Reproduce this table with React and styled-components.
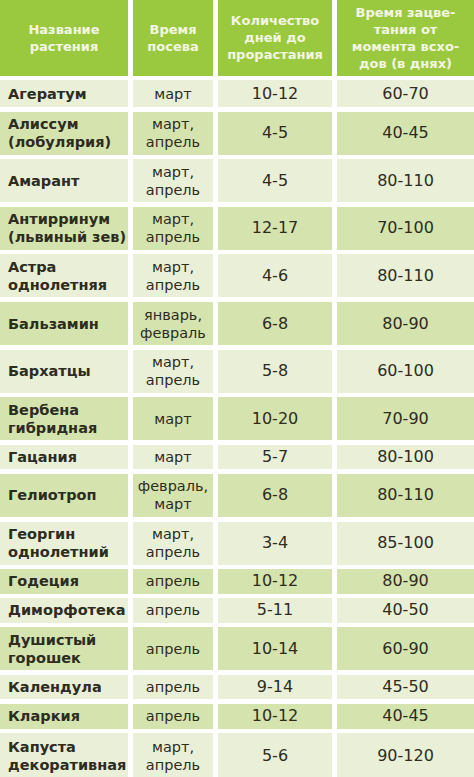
import React from 'react'
import styled, { createGlobalStyle } from 'styled-components'

const GlobalStyle = createGlobalStyle`
  html, body {
    margin: 0;
    padding: 0;
    background: #ffffff;
  }
  body {
    font-family: "DejaVu Sans", "Liberation Sans", sans-serif;
  }
`

const plants = [
  { name: ['Агератум'], month: ['март'], days: '10-12', bloom: '60-70', h: 27 },
  { name: ['Алиссум', '(лобулярия)'], month: ['март,', 'апрель'], days: '4-5', bloom: '40-45' },
  { name: ['Амарант'], month: ['март,', 'апрель'], days: '4-5', bloom: '80-110' },
  { name: ['Антирринум', '(львиный зев)'], month: ['март,', 'апрель'], days: '12-17', bloom: '70-100' },
  { name: ['Астра', 'однолетняя'], month: ['март,', 'апрель'], days: '4-6', bloom: '80-110' },
  { name: ['Бальзамин'], month: ['январь,', 'февраль'], days: '6-8', bloom: '80-90' },
  { name: ['Бархатцы'], month: ['март,', 'апрель'], days: '5-8', bloom: '60-100' },
  { name: ['Вербена', 'гибридная'], month: ['март'], days: '10-20', bloom: '70-90' },
  { name: ['Гацания'], month: ['март'], days: '5-7', bloom: '80-100' },
  { name: ['Гелиотроп'], month: ['февраль,', 'март'], days: '6-8', bloom: '80-110' },
  { name: ['Георгин', 'однолетний'], month: ['март,', 'апрель'], days: '3-4', bloom: '85-100' },
  { name: ['Годеция'], month: ['апрель'], days: '10-12', bloom: '80-90' },
  { name: ['Диморфотека'], month: ['апрель'], days: '5-11', bloom: '40-50' },
  { name: ['Душистый', 'горошек'], month: ['апрель'], days: '10-14', bloom: '60-90' },
  { name: ['Календула'], month: ['апрель'], days: '9-14', bloom: '45-50' },
  { name: ['Кларкия'], month: ['апрель'], days: '10-12', bloom: '40-45' },
  { name: ['Капуста', 'декоративная'], month: ['март,', 'апрель'], days: '5-6', bloom: '90-120', h: 46 },
]

const Table = styled.div`
  width: 474px;
  display: flex;
  flex-direction: column;
  gap: 4.6px;
`

const Row = styled.div`
  display: grid;
  grid-template-columns: 128px 80px 114px 1fr;
  column-gap: 5px;
  height: ${(p) => p.$h}px;
`

const HeadCell = styled.div`
  background: #9ac93f;
  color: #f3f6e2;
  font-weight: bold;
  font-size: 13px;
  line-height: 17px;
  display: flex;
  align-items: center;
  justify-content: center;
  text-align: center;
`

const Cell = styled.div`
  background: ${(p) => (p.$dark ? '#d5e4ae' : '#e9f0d7')};
  color: #2d2c1f;
  font-size: ${(p) => (p.$num ? '16px' : '14.5px')};
  line-height: 18px;
  display: flex;
  flex-direction: column;
  justify-content: center;
  align-items: ${(p) => (p.$left ? 'flex-start' : 'center')};
  text-align: ${(p) => (p.$left ? 'left' : 'center')};
  padding-left: ${(p) => (p.$left ? '8px' : '0')};
  font-weight: ${(p) => (p.$bold ? 'bold' : 'normal')};
  white-space: nowrap;
`

const Lines = ({ items }) => items.map((t, i) => <span key={i}>{t}</span>)

export default function App() {
  return (
    <>
      <GlobalStyle />
      <Table>
        <Row $h={75.5}>
          <HeadCell>Название<br />растения</HeadCell>
          <HeadCell>Время<br />посева</HeadCell>
          <HeadCell>Количество<br />дней до<br />прорастания</HeadCell>
          <HeadCell>Время зацве-<br />тания от<br />момента всхо-<br />дов (в днях)</HeadCell>
        </Row>
        {plants.map((p, i) => {
          const dark = i % 2 === 1
          const twoLines = p.name.length > 1 || p.month.length > 1
          const h = p.h || (twoLines ? 43 : 24.5)
          return (
            <Row key={p.name.join(' ')} $h={h}>
              <Cell $dark={dark} $left $bold><Lines items={p.name} /></Cell>
              <Cell $dark={dark}><Lines items={p.month} /></Cell>
              <Cell $dark={dark} $num>{p.days}</Cell>
              <Cell $dark={dark} $num>{p.bloom}</Cell>
            </Row>
          )
        })}
      </Table>
    </>
  )
}
